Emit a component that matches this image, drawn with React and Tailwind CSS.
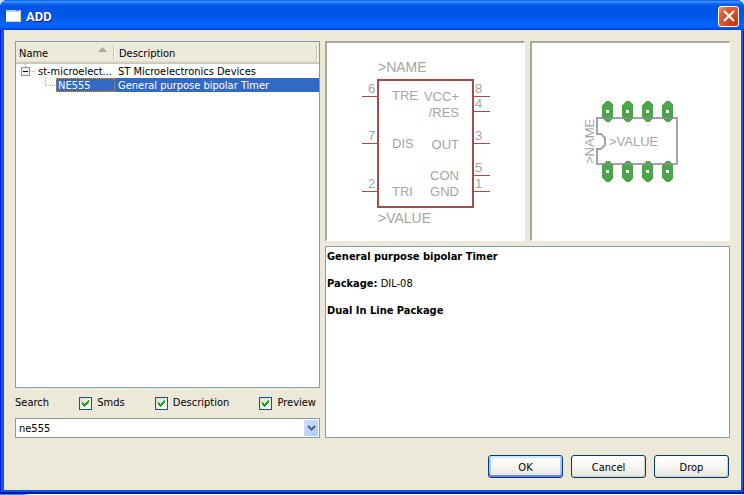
import React, { useState } from "react";

const leftPins = [
  { number: "6", name: "TRE", y: 53, nameY: 57 },
  { number: "7", name: "DIS", y: 100, nameY: 105 },
  { number: "2", name: "TRI", y: 148, nameY: 153 },
];

const rightPins = [
  { number: "8", name: "VCC+", y: 53, nameY: 58 },
  { number: "4", name: "/RES", y: 68, nameY: 74 },
  { number: "3", name: "OUT", y: 100, nameY: 106 },
  { number: "5", name: "CON", y: 132, nameY: 137 },
  { number: "1", name: "GND", y: 148, nameY: 153 },
];

function SymbolPreview() {
  return (
    <svg
      viewBox="0 0 197 197"
      className="block w-full font-['Liberation_Sans',sans-serif] text-[13px]"
      fill="#a5a5a5"
    >
      <g shapeRendering="crispEdges" stroke="#a54b4b" fill="none">
        <rect x="51" y="37" width="95" height="127" strokeWidth="2" />
        {leftPins.map((pin) => (
          <path key={pin.number} d={`M35 ${pin.y + 0.5}H50`} />
        ))}
        {rightPins.map((pin) => (
          <path key={pin.number} d={`M147 ${pin.y + 0.5}H163`} />
        ))}
      </g>
      <text x="51" y="29" className="text-[14px]">&gt;NAME</text>
      <text x="51" y="180" className="text-[14px]">&gt;VALUE</text>
      {leftPins.map((pin) => (
        <g key={pin.number}>
          <text x="41" y={pin.y - 3}>{pin.number}</text>
          <text x="65" y={pin.nameY}>{pin.name}</text>
        </g>
      ))}
      {rightPins.map((pin) => (
        <g key={pin.number}>
          <text x="148" y={pin.y - 3}>{pin.number}</text>
          <text x="132" y={pin.nameY} textAnchor="end">{pin.name}</text>
        </g>
      ))}
    </svg>
  );
}

function PackagePreview() {
  return (
    <svg
      viewBox="0 0 197 197"
      className="block w-full font-['Liberation_Sans',sans-serif] text-[13px]"
      fill="#a5a5a5"
    >
      {[70, 90, 110, 130].map((x) =>
        [58, 118].map((y) => (
          <g key={`${x}-${y}`} shapeRendering="crispEdges">
            <path
              d={`M${x + 4} ${y}h3l4 4v13l-4 4h-3l-4 -4v-13z`}
              fill="#4ba54b"
            />
            <rect x={x + 4} y={y + 9} width="3" height="3" fill="#fff" />
          </g>
        ))
      )}
      <path
        d="M65 91V75H145V121H65V106H69L73 102V95L69 91Z"
        fill="none"
        stroke="#8c8c8c"
        strokeOpacity="0.8"
        strokeWidth="2"
      />
      <text x="77" y="103">&gt;VALUE</text>
      <text transform="translate(62 121) rotate(-90)">&gt;NAME</text>
    </svg>
  );
}

function PreviewPane({ children }) {
  return (
    <div className="flex-1 bg-white border-t-2 border-l-2 border-r border-b border-t-[#aca899] border-l-[#aca899] border-r-white border-b-white">
      {children}
    </div>
  );
}

function Check({ label, checked, onChange }) {
  return (
    <label className="flex items-center gap-[5px]">
      <span className="relative block w-[13px] h-[13px]">
        <input
          type="checkbox"
          checked={checked}
          onChange={onChange}
          className="block appearance-none w-[13px] h-[13px] border border-[#1c5180] bg-linear-to-br from-[#dcdcd7] to-white"
        />
        {checked && (
          <svg
            viewBox="0 0 13 13"
            className="absolute inset-0 pointer-events-none"
            fill="#21a121"
            shapeRendering="crispEdges"
          >
            <path d="M3 5h1v1h1v1h1v-1h1v-1h1v-1h1v-1h1v3h-1v1h-1v1h-1v1h-1v1h-1v-1h-1v-1h-1z" />
          </svg>
        )}
      </span>
      {label}
    </label>
  );
}

function DialogButton({ primary, children }) {
  return (
    <button
      className={`w-[75px] h-[23px] pt-[2px] rounded-[3px] border border-[#003c74] bg-linear-to-b from-white via-[#f6f5f1] to-[#e8e6df] ${
        primary
          ? "shadow-[inset_0_2px_0_#cee7ff,inset_0_-2px_0_#6982ee,inset_2px_0_0_#a9c4f5,inset_-2px_0_0_#a9c4f5]"
          : "shadow-[inset_-1px_-1px_0_#d6d0c5]"
      }`}
    >
      {children}
    </button>
  );
}

function DeviceTree() {
  return (
    <div className="flex-1 bg-white border border-[#7f9db9]">
      <table className="w-full table-fixed border-collapse leading-[12px]">
        <thead>
          <tr className="h-[22px] bg-[#ebeadb] text-left shadow-[inset_0_-1px_0_#cbc7b8,inset_0_-2px_0_#d6d2c2,inset_0_-3px_0_#e2decd]">
            <th className="relative w-[99px] p-0 pt-[2px] pl-[3px] font-normal">
              Name
              <svg
                viewBox="0 0 9 5"
                className="absolute right-[8px] top-[5px] w-[9px] h-[5px]"
                fill="#aca899"
              >
                <path d="M4.500 0L9 5H0z" />
              </svg>
              <span className="absolute right-0 top-[3px] w-[2px] h-[15px] border-l border-[#c7c5b2] bg-white" />
            </th>
            <th className="relative p-0 pt-[2px] pl-[4px] font-normal">
              Description
              <span className="absolute right-[1px] top-[3px] w-[2px] h-[15px] border-l border-[#c7c5b2] bg-white" />
            </th>
          </tr>
        </thead>
        <tbody>
          <tr className="h-[14px] whitespace-nowrap">
            <td className="p-0">
              <div className="flex h-[14px]">
                <svg
                  viewBox="0 0 20 14"
                  className="w-[20px] h-[14px] shrink-0"
                  shapeRendering="crispEdges"
                >
                  <path d="M9.500 0V3M14 7.500H20" stroke="#aca899" strokeDasharray="1 1" />
                  <rect x="5.500" y="3.500" width="8" height="8" rx="1" fill="#f1efe8" stroke="#7b9ab8" />
                  <path d="M7 7.500H12" stroke="#000" />
                </svg>
                <span className="pt-[2px] pl-[2px]">st-microelect...</span>
              </div>
            </td>
            <td className="p-0 pt-[2px] pl-[3px]">ST Microelectronics Devices</td>
          </tr>
          <tr className="h-[14px] whitespace-nowrap text-white">
            <td className="p-0">
              <div className="flex h-[14px]">
                <svg
                  viewBox="0 0 40 14"
                  className="w-[40px] h-[14px] shrink-0"
                  shapeRendering="crispEdges"
                >
                  <path d="M29.500 0V7.500H40" fill="none" stroke="#aca899" strokeDasharray="1 1" />
                </svg>
                <span className="flex-1 pt-px pl-[1px] bg-[#316ac5] border border-dotted border-[#ce953a]">
                  NE555
                </span>
              </div>
            </td>
            <td className="p-0 pt-[2px] pl-[3px] bg-[#316ac5]">General purpose bipolar Timer</td>
          </tr>
        </tbody>
      </table>
    </div>
  );
}

export default function App() {
  const [filters, setFilters] = useState({
    Smds: true,
    Description: true,
    Preview: true,
  });

  const toggle = (name) => setFilters({ ...filters, [name]: !filters[name] });

  return (
    <div className="min-h-screen flex flex-col bg-[#d4dcf0] font-['DejaVu_Sans_Condensed','DejaVu_Sans',sans-serif] text-[11px] leading-[14px] text-black">
      <div className="flex-1 flex flex-col rounded-t-[7px] overflow-hidden bg-[#0046e0]">
        <header className="flex items-center justify-between h-[30px] pt-[2px] pl-[6px] pr-[5px] bg-[linear-gradient(180deg,#0050d8_0%,#3a93ff_5%,#0a62ee_14%,#0054e3_24%,#0055e5_50%,#0066ff_82%,#0062f8_90%,#003dd7_100%)]">
          <div className="flex items-center gap-[5px]">
            <svg viewBox="0 0 15 12" className="w-[15px] h-[12px]" shapeRendering="crispEdges">
              <rect width="15" height="12" fill="#fff" />
              <rect width="15" height="2" fill="#b8d0f4" />
              <path d="M10 0h1v1h-1zM12 0h1v1h-1z" fill="#3a70d8" />
              <path d="M0 11.500H15M14.500 0V12" stroke="#d8d4c4" />
            </svg>
            <h1 className="pt-[2px] font-['Roboto',sans-serif] text-[13px] font-bold text-white [text-shadow:1px_1px_0_#0a1883]">
              ADD
            </h1>
          </div>
          <button
            aria-label="Close"
            className="grid place-items-center w-[21px] h-[21px] rounded-[3px] border border-white bg-[radial-gradient(circle_at_90%_90%,#c83410_0%,#d94a24_45%,#e3603c_75%,#eda08c_100%)]"
          >
            <svg viewBox="0 0 12 12" className="w-[12px] h-[12px]">
              <path d="M1 1L11 11M11 1L1 11" stroke="#fff" strokeWidth="2.200" />
            </svg>
          </button>
        </header>

        <div className="flex-1 flex pl-1 pr-[3px] pb-1 bg-[#0a55ee] shadow-[inset_1px_0_0_#0019cf,inset_-1px_0_0_#00138c,inset_0_-2px_0_#00199c]">
          <main className="flex-1 flex flex-col bg-[#ece9d8] px-[11px] pt-[11px] pb-[12px] gap-[17px]">
            <div className="flex-1 flex gap-[5px]">
              <section className="w-[305px] flex flex-col">
                <DeviceTree />
                <div className="flex items-center justify-between h-[30px] pr-[4px]">
                  <label htmlFor="search">Search</label>
                  {Object.keys(filters).map((name) => (
                    <Check
                      key={name}
                      label={name}
                      checked={filters[name]}
                      onChange={() => toggle(name)}
                    />
                  ))}
                </div>
                <div className="relative">
                  <select
                    id="search"
                    className="block appearance-none w-full h-[20px] pt-[2px] pl-[3px] bg-white border border-[#7f9db9]"
                  >
                    <option>ne555</option>
                  </select>
                  <span className="absolute right-[2px] top-[2px] bottom-[2px] grid place-items-center w-[14px] rounded-[1px] bg-linear-to-br from-[#d0dffe] to-[#aec8f7] pointer-events-none">
                    <svg viewBox="0 0 9 6" className="w-[9px] h-[6px]">
                      <path d="M1 1L4.500 4.500L8 1" fill="none" stroke="#4d6185" strokeWidth="2" />
                    </svg>
                  </span>
                </div>
              </section>

              <section className="flex-1 flex flex-col gap-[5px]">
                <div className="flex gap-[5px]">
                  <PreviewPane>
                    <SymbolPreview />
                  </PreviewPane>
                  <PreviewPane>
                    <PackagePreview />
                  </PreviewPane>
                </div>
                <div className="flex-1 flex flex-col gap-[13px] bg-white border border-[#7f9db9] px-px py-[3px]">
                  <p className="font-bold">General purpose bipolar Timer</p>
                  <p>
                    <b>Package:</b> DIL-08
                  </p>
                  <p className="font-bold">Dual In Line Package</p>
                </div>
              </section>
            </div>

            <footer className="flex justify-end gap-[8px] pr-px">
              <DialogButton primary>OK</DialogButton>
              <DialogButton>Cancel</DialogButton>
              <DialogButton>Drop</DialogButton>
            </footer>
          </main>
        </div>
      </div>
      <div className="h-px bg-linear-to-r from-[#5a80c8] from-3% to-white to-4%" />
    </div>
  );
}
